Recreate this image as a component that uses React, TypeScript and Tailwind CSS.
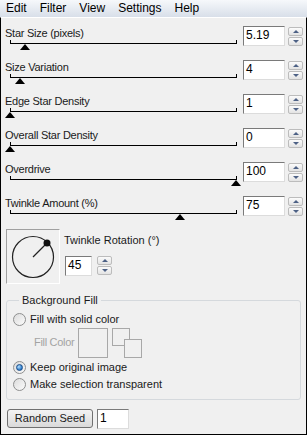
import React from "react";

type Row = { label: string; value: string; pct: number };

const rows: Row[] = [
  { label: "Star Size (pixels)", value: "5.19", pct: 6.7 },
  { label: "Size Variation", value: "4", pct: 4.4 },
  { label: "Edge Star Density", value: "1", pct: 0 },
  { label: "Overall Star Density", value: "0", pct: 0 },
  { label: "Overdrive", value: "100", pct: 100 },
  { label: "Twinkle Amount (%)", value: "75", pct: 75 },
];

const menu = ["Edit", "Filter", "View", "Settings", "Help"];

const Spin = () => (
  <div className="flex h-[19px] w-[15px] flex-col justify-between">
    <div className="flex h-[9px] items-center justify-center rounded-[2px] border border-[#bcbcbc] bg-linear-to-b from-[#fbfbfb] to-[#e3e3e3]">
      <div className="h-0 w-0 border-x-[3px] border-b-[3px] border-x-transparent border-b-[#4d6185]" />
    </div>
    <div className="flex h-[9px] items-center justify-center rounded-[2px] border border-[#bcbcbc] bg-linear-to-b from-[#fbfbfb] to-[#e3e3e3]">
      <div className="h-0 w-0 border-x-[3px] border-t-[3px] border-x-transparent border-t-[#4d6185]" />
    </div>
  </div>
);

const Field = ({ value, className }: { value: string; className: string }) => (
  <div
    className={
      "h-[20px] border border-t-[#7a7a7a] border-l-[#7a7a7a] border-r-[#dcdcdc] border-b-[#dcdcdc] bg-white pl-[2px] text-[12px] leading-[16px] text-black " +
      className
    }
  >
    {value}
  </div>
);

const Radio = ({ on }: { on?: boolean }) => (
  <div className="flex h-[13px] w-[13px] items-center justify-center rounded-full border border-[#8e8f8f] bg-linear-to-br from-[#dcdcdc] to-[#fbfbfb]">
    {on && (
      <div className="h-[7px] w-[7px] rounded-full border border-[#1b4f8a] bg-[radial-gradient(circle_at_35%_35%,#b5e0ff,#2b78c8_70%)]" />
    )}
  </div>
);

const SliderRow = ({ row }: { row: Row }) => (
  <div className="flex h-[34px] items-start">
    <div className="w-[237px] pl-[4px]">
      <div className="h-[14px] text-[11px] leading-[14px] tracking-[-0.25px] text-[#1a1a1a]">
        {row.label}
      </div>
      <div className="relative ml-[5px] h-[4px] w-[227px] border-x border-b border-black">
        <div
          className="absolute top-[4px] h-0 w-[1px] border-x-[5px] border-b-[6px] border-x-transparent border-b-black"
          style={{ left: -6 + (row.pct / 100) * 226 }}
        />
      </div>
    </div>
    <Field value={row.value} className="ml-[5px] w-[42px]" />
    <div className="ml-[3px] mt-[1px]">
      <Spin />
    </div>
  </div>
);

export default function App() {
  return (
    <div className="flex h-[435px] w-[307px] flex-col bg-[#f0f0f0] font-['Liberation_Sans',Arial,sans-serif] text-black">
      <div className="flex h-[17px] items-center gap-[13px] bg-linear-to-b from-[#f6f8fb] to-[#d8dfe9] pl-[6px] text-[12px] leading-[17px]">
        {menu.map((m) => (
          <span key={m}>{m}</span>
        ))}
      </div>
      <div className="flex flex-1 flex-col border-x border-b border-t border-black border-t-white pt-[8px]">
        {rows.map((r) => (
          <SliderRow key={r.label} row={r} />
        ))}

        <div className="-mt-[1px] flex h-[64px] items-start pl-[5px]">
          <div className="h-[55px] w-[54px] border border-t-[#a0a0a0] border-l-[#a0a0a0] border-r-white border-b-white">
            <svg width="52" height="53" viewBox="0 0 52 53">
              <circle cx="26" cy="27" r="20.5" fill="none" stroke="#222" strokeWidth="1.2" />
              <line x1="26" y1="27" x2="40" y2="13" stroke="#222" strokeWidth="1.2" />
              <circle cx="40" cy="13" r="3.5" fill="#111" />
            </svg>
          </div>
          <div className="ml-[4px] pt-[4px]">
            <div className="h-[14px] text-[11px] leading-[14px] text-[#1a1a1a]">
              Twinkle Rotation (°)
            </div>
            <div className="mt-[9px] flex items-start pl-[1px]">
              <Field value="45" className="w-[27px]" />
              <div className="ml-[5px]">
                <Spin />
              </div>
            </div>
          </div>
        </div>

        <fieldset className="mx-[5px] h-[107px] rounded-[3px] border border-[#d5d9dd] px-0 pb-0 pl-[6px]">
          <legend className="ml-[6px] px-[3px] text-[11px] leading-[14px] text-[#1a1a1a]">
            Background Fill
          </legend>
          <div className="mt-[4px] flex h-[16px] items-center gap-[4px] text-[11px] text-[#1a1a1a]">
            <Radio />
            <span>Fill with solid color</span>
          </div>
          <div className="mt-[1px] flex h-[30px] items-start">
            <div className="ml-[21px] w-[44px] pt-[7px] text-[11px] leading-[14px] tracking-[-0.3px] text-[#a3a3a3]">
              Fill Color
            </div>
            <div className="h-[30px] w-[30px] border border-[#a8a8a8]" />
            <div className="relative ml-[4px] h-[30px] w-[30px]">
              <div className="absolute left-0 top-0 h-[18px] w-[18px] border border-[#a8a8a8]" />
              <div className="absolute left-[12px] top-[11px] h-[19px] w-[18px] border border-[#a8a8a8] bg-[#f0f0f0]" />
            </div>
          </div>
          <div className="mt-[1px] flex h-[16px] items-center gap-[4px] text-[11px] text-[#1a1a1a]">
            <Radio on />
            <span>Keep original image</span>
          </div>
          <div className="mt-[1px] flex h-[16px] items-center gap-[4px] text-[11px] text-[#1a1a1a]">
            <Radio />
            <span>Make selection transparent</span>
          </div>
        </fieldset>

        <div className="mt-[9px] flex items-start pl-[6px]">
          <button className="flex h-[19px] w-[86px] items-center justify-center rounded-[3px] border border-[#707070] bg-linear-to-b from-[#f3f3f3] to-[#dadada] text-[11px] text-[#1a1a1a]">
            Random Seed
          </button>
          <Field value="1" className="ml-[4px] h-[19px] w-[32px]" />
        </div>
      </div>
    </div>
  );
}
